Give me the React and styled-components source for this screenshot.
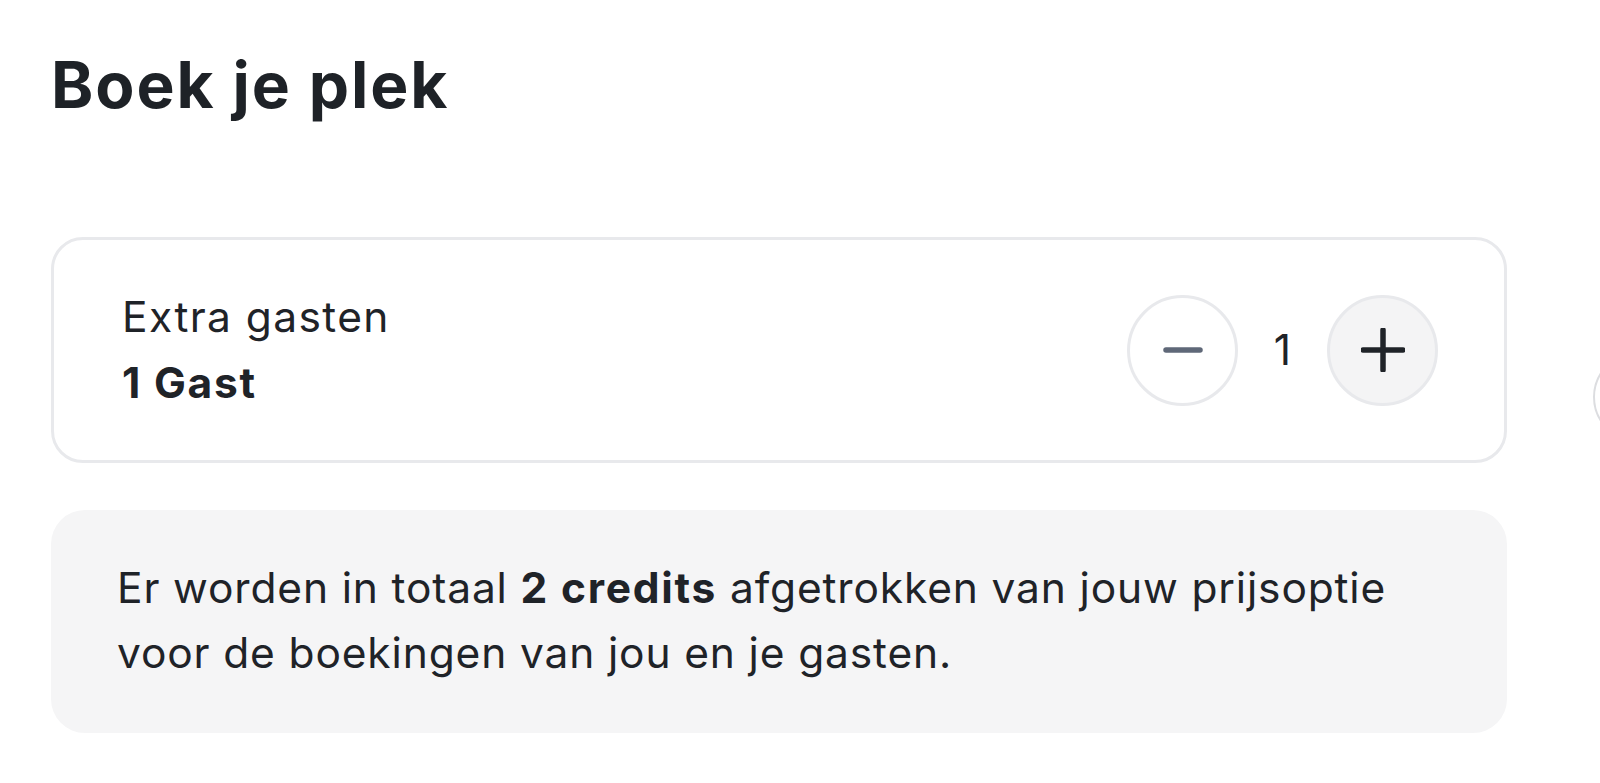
import styled, { createGlobalStyle } from 'styled-components';

const GlobalStyle = createGlobalStyle`
  html, body {
    margin: 0;
    padding: 0;
    background: #ffffff;
    overflow: hidden;
  }
  body {
    font-family: Inter, "Noto Sans", sans-serif;
    color: #1f2328;
  }
`;

const Page = styled.main`
  position: relative;
  width: 1600px;
  height: 783px;
  padding: 45px 0 0 51px;
  box-sizing: border-box;
  overflow: hidden;
`;

const Column = styled.section`
  display: flex;
  flex-direction: column;
  width: 1456px;
`;

const Title = styled.h1`
  margin: 0 0 112px;
  font-size: 64px;
  line-height: 80px;
  font-weight: 700;
  letter-spacing: 1.9px;
  color: #1e2227;
`;

const GuestCard = styled.div`
  display: flex;
  align-items: center;
  justify-content: space-between;
  padding: 44px 66px 44px 68px;
  border: 3px solid #e8e9ec;
  border-radius: 32px;
  box-sizing: border-box;
  height: 226px;
`;

const Label = styled.div`
  display: flex;
  flex-direction: column;
  font-size: 42.5px;
  line-height: 66px;
  letter-spacing: 1.4px;
`;

const Strong = styled.span`
  font-weight: 700;
  letter-spacing: 1.75px;
`;

const Stepper = styled.div`
  display: flex;
  align-items: center;
`;

const RoundButton = styled.button`
  display: flex;
  align-items: center;
  justify-content: center;
  width: 111px;
  height: 111px;
  padding: 0;
  border: 3px solid #e8e9ec;
  border-radius: 50%;
  background: ${({ $filled }) => ($filled ? '#f4f4f5' : '#ffffff')};
  cursor: pointer;
`;

const Count = styled.span`
  width: 89px;
  text-align: center;
  font-size: 42.5px;
  line-height: 66px;
`;

const Notice = styled.p`
  margin: 47px 0 0;
  padding: 45px 67px 48px 66px;
  background: #f5f5f6;
  border-radius: 34px;
  font-size: 42.5px;
  line-height: 65px;
  letter-spacing: 0.85px;
  color: #1f2328;
`;

const NextHandle = styled.div`
  position: absolute;
  left: 1593px;
  top: 352px;
  width: 90px;
  height: 90px;
  border: 2px solid #dcdde0;
  border-radius: 50%;
  box-sizing: border-box;
  background: #ffffff;
`;

const MinusIcon = () => (
  <svg width="40" height="40" viewBox="0 0 40 40" fill="none">
    <line x1="3" y1="20" x2="37" y2="20" stroke="#5f6878" strokeWidth="5.5" strokeLinecap="round" />
  </svg>
);

const PlusIcon = () => (
  <svg width="44" height="44" viewBox="0 0 44 44" fill="none">
    <line x1="2" y1="22" x2="42" y2="22" stroke="#1f2328" strokeWidth="5.5" strokeLinecap="round" />
    <line x1="22" y1="2" x2="22" y2="42" stroke="#1f2328" strokeWidth="5.5" strokeLinecap="round" />
  </svg>
);

export default function App() {
  const guests = 1;
  return (
    <>
      <GlobalStyle />
      <Page>
        <Column>
          <Title>Boek je plek</Title>
          <GuestCard>
            <Label>
              <span>Extra gasten</span>
              <Strong>{guests} Gast</Strong>
            </Label>
            <Stepper>
              <RoundButton aria-label="Minder gasten">
                <MinusIcon />
              </RoundButton>
              <Count>{guests}</Count>
              <RoundButton $filled aria-label="Meer gasten">
                <PlusIcon />
              </RoundButton>
            </Stepper>
          </GuestCard>
          <Notice>
            Er worden in totaal <Strong>2 credits</Strong> afgetrokken van jouw prijsoptie
            <br />
            voor de boekingen van jou en je gasten.
          </Notice>
        </Column>
        <NextHandle />
      </Page>
    </>
  );
}
